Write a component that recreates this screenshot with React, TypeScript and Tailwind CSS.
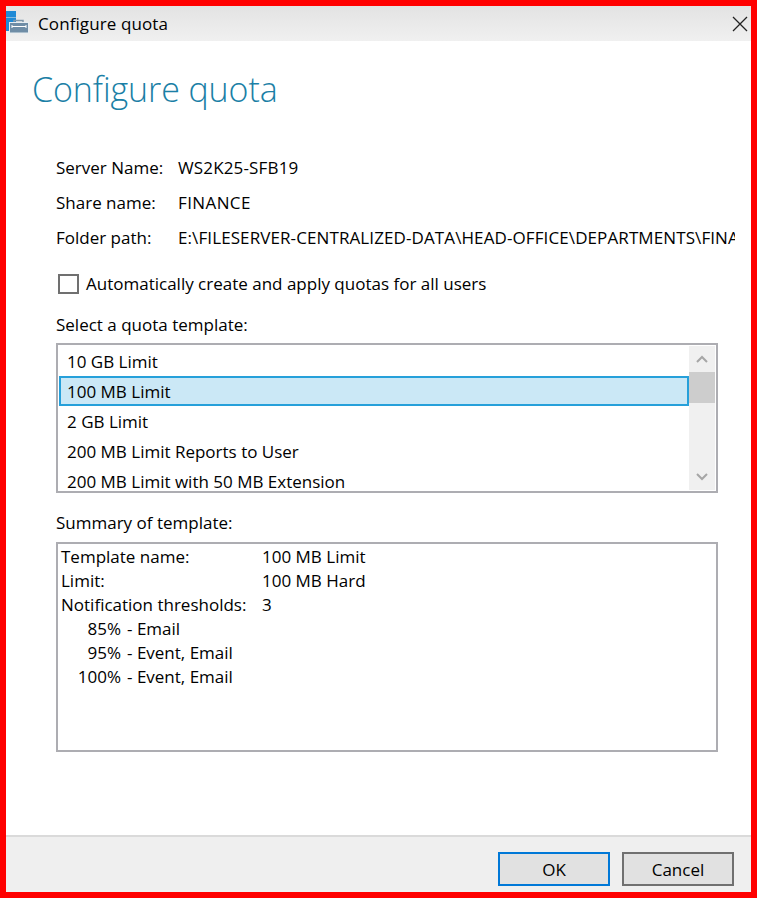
const font = { fontFamily: '"Open Sans", "Noto Sans", sans-serif' };

const templates = [
  '10 GB Limit',
  '100 MB Limit',
  '2 GB Limit',
  '200 MB Limit Reports to User',
  '200 MB Limit with 50 MB Extension',
];

function WindowIcon() {
  return (
    <svg width="24" height="24" viewBox="0 0 24 24" className="shrink-0">
      <rect x="0" y="0" width="10" height="6" fill="#1f8ad6" />
      <rect x="0" y="6.500" width="10" height="5" fill="#1f8ad6" />
      <rect x="0" y="11" width="3" height="9" fill="#1f8ad6" />
      <path d="M8 11v-1.500h9V11" fill="none" stroke="#7f97aa" strokeWidth="1.500" />
      <rect x="3.500" y="11.500" width="19" height="10.500" fill="#6f8da6" stroke="#e8eef2" />
      <path d="M6 15.500h14M6 14v3M20 14v3" fill="none" stroke="#ffffff" />
    </svg>
  );
}

function InfoRow({ label, value, className }: { label: string; value: string; className: string }) {
  return (
    <div className="flex h-[35px] items-center whitespace-nowrap">
      <span className="w-[122px] shrink-0">{label}</span>
      <span className={className}>{value}</span>
    </div>
  );
}

export default function App() {
  return (
    <div
      style={font}
      className="flex h-[898px] w-[757px] flex-col overflow-hidden border-[6px] border-[#ff0000] bg-white text-[17px] text-black"
    >
      <header className="flex h-[35px] shrink-0 items-center bg-gradient-to-b from-[#e3e3e3] to-[#f0f0f0]">
        <div className="h-[35px] w-[32px] shrink-0 pt-[5px]">
          <WindowIcon />
        </div>
        <span className="tracking-[0.1px]">Configure quota</span>
        <svg width="16" height="16" viewBox="0 0 16 16" className="ml-auto mr-[3px]">
          <path d="M1 1l14 14M15 1L1 15" stroke="#222222" strokeWidth="1.300" fill="none" />
        </svg>
      </header>

      <main className="flex min-h-0 flex-1 flex-col">
        <h1 className="ml-[26px] mt-[23px] h-[50px] text-[34px] leading-[50px] font-light tracking-[-0.1px] text-[#1b7fa6]">
          Configure quota
        </h1>

        <section className="ml-[50px] mr-[16px] mt-[36px]">
          <InfoRow label="Server Name:" value="WS2K25-SFB19" className="tracking-[0.15px]" />
          <InfoRow label="Share name:" value="FINANCE" className="tracking-[0.4px]" />
          <InfoRow
            label="Folder path:"
            value="E:\FILESERVER-CENTRALIZED-DATA\HEAD-OFFICE\DEPARTMENTS\FINANCE"
            className="overflow-hidden tracking-[0.1px]"
          />
        </section>

        <label className="ml-[52px] mt-[17px] flex h-[24px] items-center gap-[7px]">
          <span className="h-[20px] w-[21px] border-2 border-[#707070] bg-white" />
          <span>Automatically create and apply quotas for all users</span>
        </label>

        <div className="ml-[50px] mt-[17px] h-[24px] leading-[24px]">Select a quota template:</div>

        <div className="ml-[50px] mt-[6px] flex h-[150px] w-[662px] shrink-0 border-2 border-[#adadb2] p-[1px]">
          <ul className="min-w-0 flex-1 overflow-hidden">
            {templates.map((t) => (
              <li
                key={t}
                className={
                  t === '100 MB Limit'
                    ? 'box-border flex h-[30px] items-center border-2 border-[#26a0da] bg-[#cbe8f6] pl-[6px] pt-[2px]'
                    : 'box-border flex h-[30px] items-center pl-[8px] pt-[2px]'
                }
              >
                {t}
              </li>
            ))}
          </ul>
          <div className="flex w-[26px] shrink-0 flex-col bg-[#f0f0f0]">
            <div className="flex h-[26px] items-center justify-center">
              <svg width="12" height="8" viewBox="0 0 12 8">
                <path d="M1 7l5-5 5 5" stroke="#a6a6a6" strokeWidth="2" fill="none" />
              </svg>
            </div>
            <div className="h-[31px] bg-[#cdcdcd]" />
            <div className="flex-1" />
            <div className="flex h-[26px] items-center justify-center">
              <svg width="12" height="8" viewBox="0 0 12 8">
                <path d="M1 1l5 5 5-5" stroke="#a6a6a6" strokeWidth="2" fill="none" />
              </svg>
            </div>
          </div>
        </div>

        <div className="ml-[50px] mt-[18px] h-[24px] leading-[24px]">Summary of template:</div>

        <div className="ml-[50px] mt-[7px] h-[210px] w-[662px] shrink-0 border-2 border-[#adadb2] px-[3px] py-[1px] leading-[24px]">
          <div className="grid grid-cols-[201px_1fr]">
            <span>Template name:</span>
            <span>100 MB Limit</span>
            <span>Limit:</span>
            <span>100 MB Hard</span>
            <span>Notification thresholds:</span>
            <span>3</span>
          </div>
          <div className="grid grid-cols-[60px_1fr] gap-x-[6px] whitespace-nowrap">
            <span className="text-right">85%</span>
            <span>- Email</span>
            <span className="text-right">95%</span>
            <span>- Event, Email</span>
            <span className="text-right">100%</span>
            <span>- Event, Email</span>
          </div>
        </div>
      </main>

      <footer className="flex h-[57px] shrink-0 items-start justify-end gap-[12px] border-t-2 border-[#dadada] bg-[#efefef] pr-[17px] pt-[15px]">
        <button className="h-[34px] w-[112px] border-2 border-[#0078d7] bg-[#e1e1e1] pt-[2px]">OK</button>
        <button className="h-[34px] w-[112px] border-2 border-[#707070] bg-[#e1e1e1] pt-[2px]">Cancel</button>
      </footer>
    </div>
  );
}
